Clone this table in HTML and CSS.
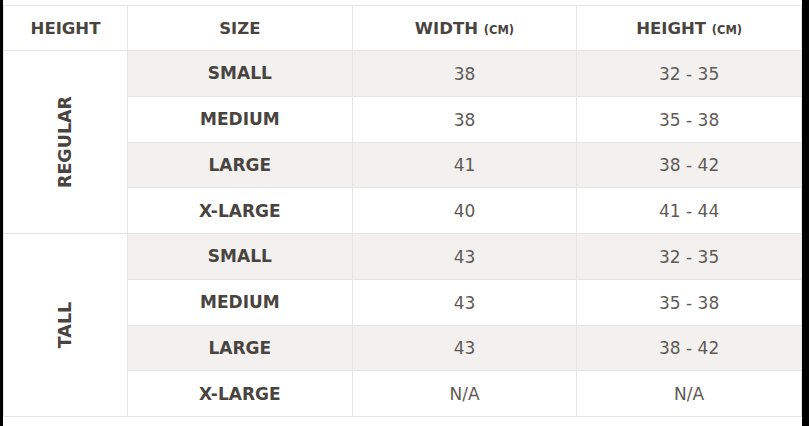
FILE: index.html
```html
<!DOCTYPE html>
<html>
<head>
<meta charset="utf-8">
<link rel="stylesheet" href="styles.css">
</head>
<body>
<div class="frame">
  <table class="chart">
    <colgroup>
      <col class="c1"><col><col><col>
    </colgroup>
    <thead>
      <tr>
        <th>HEIGHT</th>
        <th>SIZE</th>
        <th>WIDTH <span class="unit">(CM)</span></th>
        <th>HEIGHT <span class="unit">(CM)</span></th>
      </tr>
    </thead>
    <tbody>
      <tr class="shade">
        <td class="group" rowspan="4"><span class="vert">REGULAR</span></td>
        <td class="size">SMALL</td><td class="num">38</td><td class="num">32 - 35</td>
      </tr>
      <tr>
        <td class="size">MEDIUM</td><td class="num">38</td><td class="num">35 - 38</td>
      </tr>
      <tr class="shade">
        <td class="size">LARGE</td><td class="num">41</td><td class="num">38 - 42</td>
      </tr>
      <tr>
        <td class="size">X-LARGE</td><td class="num">40</td><td class="num">41 - 44</td>
      </tr>
      <tr class="shade">
        <td class="group" rowspan="4"><span class="vert">TALL</span></td>
        <td class="size">SMALL</td><td class="num">43</td><td class="num">32 - 35</td>
      </tr>
      <tr>
        <td class="size">MEDIUM</td><td class="num">43</td><td class="num">35 - 38</td>
      </tr>
      <tr class="shade">
        <td class="size">LARGE</td><td class="num">43</td><td class="num">38 - 42</td>
      </tr>
      <tr>
        <td class="size">X-LARGE</td><td class="num">N/A</td><td class="num">N/A</td>
      </tr>
    </tbody>
  </table>
</div>
</body>
</html>
```

FILE: styles.css
```css
html, body {
  margin: 0;
  padding: 0;
  background: #000;
  overflow: hidden;
}
.frame {
  margin-left: 3px;
  width: 799px;
  height: 426px;
  background: #fff;
  padding-top: 5px;
  box-sizing: border-box;
  overflow: hidden;
}
.chart {
  width: 799px;
  border-collapse: collapse;
  table-layout: fixed;
  font-family: "DejaVu Sans", sans-serif;
  color: #4a4440;
}
.c1 { width: 124px; }
.chart th, .chart td {
  border: 1px solid #e6e5e3;
  text-align: center;
  vertical-align: middle;
  padding: 0;
}
.chart th {
  height: 43px;
  font-size: 16.5px;
  font-weight: bold;
  padding-top: 1px;
}
.chart td {
  height: 44.75px;
}
.chart td.num {
  height: 43.75px;
  padding-top: 1px;
}
.unit {
  font-size: 11.5px;
}
.shade .size, .shade .num {
  background: #f2f1ef;
}
.size {
  font-size: 17px;
  font-weight: bold;
}
.num {
  font-size: 17px;
  color: #5f5a56;
}
.group {
  background: #fff;
}
.vert {
  display: inline-block;
  transform: rotate(-90deg);
  font-size: 17.5px;
  font-weight: bold;
  white-space: nowrap;
}
```
